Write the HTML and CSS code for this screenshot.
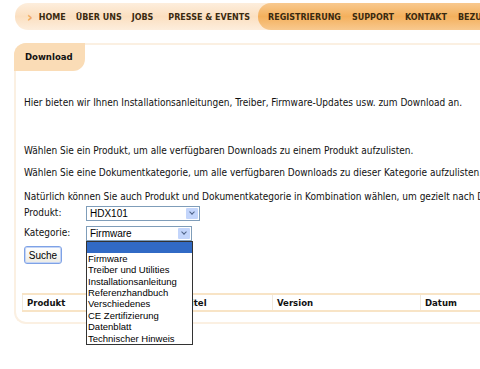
FILE: index.html
```
<!DOCTYPE html>
<html lang="de">
<head>
  <meta charset="UTF-8" />
  <title>Download</title>
  <link rel="stylesheet" href="styles.css">
</head>
<body>

<nav class="topnav">
  <div class="nav-left">
    <span class="chev">&#8250;</span>
    <a>HOME</a>
    <a>ÜBER UNS</a>
    <a>JOBS</a>
    <a class="wide-gap">PRESSE &amp; EVENTS</a>
  </div>
  <div class="nav-right">
    <a>REGISTRIERUNG</a>
    <a>SUPPORT</a>
    <a>KONTAKT</a>
    <a>BEZUGSQUELLEN</a>
  </div>
</nav>

<div class="panel">
  <div class="tab">Download</div>

  <p class="intro">Hier bieten wir Ihnen Installationsanleitungen, Treiber, Firmware-Updates usw. zum Download an.</p>
  <p class="hint first">Wählen Sie ein Produkt, um alle verfügbaren Downloads zu einem Produkt aufzulisten.</p>
  <p class="hint">Wählen Sie eine Dokumentkategorie, um alle verfügbaren Downloads zu dieser Kategorie aufzulisten.</p>
  <p class="hint last">Natürlich können Sie auch Produkt und Dokumentkategorie in Kombination wählen, um gezielt nach Downloads zu suchen.</p>

  <div class="form">
    <div class="row">
      <label>Produkt:</label>
      <div class="select wide"><span>HDX101</span><i class="arrow"></i></div>
    </div>
    <div class="row">
      <label>Kategorie:</label>
      <div class="select narrow"><span>Firmware</span><i class="arrow"></i>
        <ul class="options">
          <li class="sel">&nbsp;</li>
          <li>Firmware</li>
          <li>Treiber und Utilities</li>
          <li>Installationsanleitung</li>
          <li>Referenzhandbuch</li>
          <li>Verschiedenes</li>
          <li>CE Zertifizierung</li>
          <li>Datenblatt</li>
          <li>Technischer Hinweis</li>
        </ul>
      </div>
    </div>
    <button class="btn">Suche</button>
  </div>

  <table class="results">
    <tr>
      <th class="c1">Produkt</th>
      <th class="c2">Titel</th>
      <th class="c3">Version</th>
      <th class="c4">Datum</th>
    </tr>
  </table>
</div>

</body>
</html>
```

FILE: styles.css
```
html {
  overflow: hidden;
}
body {
  margin: 0;
  width: 640px;
  min-height: 369px;
  background: #fff;
  font-family: "DejaVu Sans Condensed", "DejaVu Sans", sans-serif;
  font-size: 10px;
  line-height: 12px;
  color: #111;
}
.topnav {
  display: flex;
  height: 27px;
  margin: 3px 0 0 15px;
  background: linear-gradient(#fdeedd, #fbdfc0 50%, #fdeedd);
  border-radius: 13px 0 0 13px;
  font-family: "DejaVu Sans", sans-serif;
  font-weight: bold;
  font-size: 8px;
  color: #3a2a10;
}
.topnav a {
  display: flex;
  align-items: center;
  padding-top: 2px;
}
.nav-left {
  display: flex;
  gap: 10px;
  padding-left: 12px;
  width: 231px;
}
.nav-left .wide-gap {
  margin-left: 5px;
}
.chev {
  display: flex;
  align-items: center;
  padding-top: 1px;
  color: #f0a860;
  font-size: 14px;
  margin-right: -4px;
}
.nav-right {
  display: flex;
  gap: 11px;
  flex: 1;
  padding-left: 10px;
  background: linear-gradient(#f8c98f, #f4b05c 50%, #f8c98f);
  border-radius: 13px 0 0 13px;
}
.panel {
  position: relative;
  margin: 13px 0 0 14px;
  height: 277px;
  border: 2px solid #fbf0e2;
  border-right: none;
  border-radius: 12px 0 0 12px;
}
.tab {
  width: 60px;
  height: 28px;
  margin: -2px 0 0 -2px;
  padding-left: 11px;
  line-height: 28px;
  background: #fadcb6;
  border-radius: 12px 0 12px 0;
  font-weight: bold;
  font-size: 9.5px;
}
.panel p {
  margin: 0;
  padding-left: 8px;
  white-space: nowrap;
}
.panel .intro {
  margin-top: 26px;
}
.panel .hint {
  margin-top: 10px;
}
.panel .hint.first {
  margin-top: 36px;
}
.panel .hint.last {
  margin-top: 12px;
}
.form {
  padding-left: 8px;
}
.row {
  display: flex;
  align-items: center;
  height: 20px;
}
.row label {
  width: 62px;
}
.select {
  position: relative;
  height: 13px;
  border: 1px solid #7f9db9;
  font-family: "Liberation Sans", Arial, sans-serif;
  font-size: 10px;
  line-height: 13px;
  color: #000;
}
.select span {
  padding-left: 3px;
}
.wide { width: 112px; }
.narrow { width: 104px; }
.arrow {
  position: absolute;
  right: 1px;
  top: 1px;
  width: 12px;
  height: 11px;
  background: #c3d5fb;
  border-radius: 1px;
}
.arrow::after {
  content: "";
  position: absolute;
  left: 4px;
  top: 2px;
  width: 3px;
  height: 3px;
  border-right: 1.5px solid #4d6185;
  border-bottom: 1.5px solid #4d6185;
  transform: rotate(45deg);
}
.options {
  position: absolute;
  left: -1px;
  top: 14px;
  width: 105px;
  margin: 0;
  padding: 0;
  list-style: none;
  background: #fff;
  border: 1px solid #333;
  font-size: 9.5px;
  z-index: 2;
}
.options li {
  height: 11.4px;
  line-height: 11.4px;
  padding-left: 1px;
}
.options li.sel {
  background: #316ac5;
}
.btn {
  margin-top: 3px;
  width: 38px;
  height: 18px;
  padding: 0;
  border: 1px solid #7ea2e6;
  border-radius: 3px;
  background: linear-gradient(#fff, #ecebe4);
  box-shadow: inset 0 0 0 1px #c4d4f5;
  font-family: "Liberation Sans", Arial, sans-serif;
  font-size: 10px;
  color: #000;
}
.results {
  margin: 29px 0 0 6px;
  width: 620px;
  border-collapse: collapse;
  border-top: 2px solid #f8e4c6;
  border-bottom: 2px solid #f8e4c6;
  border-left: 1px solid #f7ecdc;
}
.results th {
  height: 15px;
  padding: 0 4px;
  text-align: left;
  font-size: 9.5px;
  border-left: 1px solid #f1e9dd;
}
.c1 { width: 149px; }
.c2 { width: 83px; }
.c3 { width: 139px; }
```
